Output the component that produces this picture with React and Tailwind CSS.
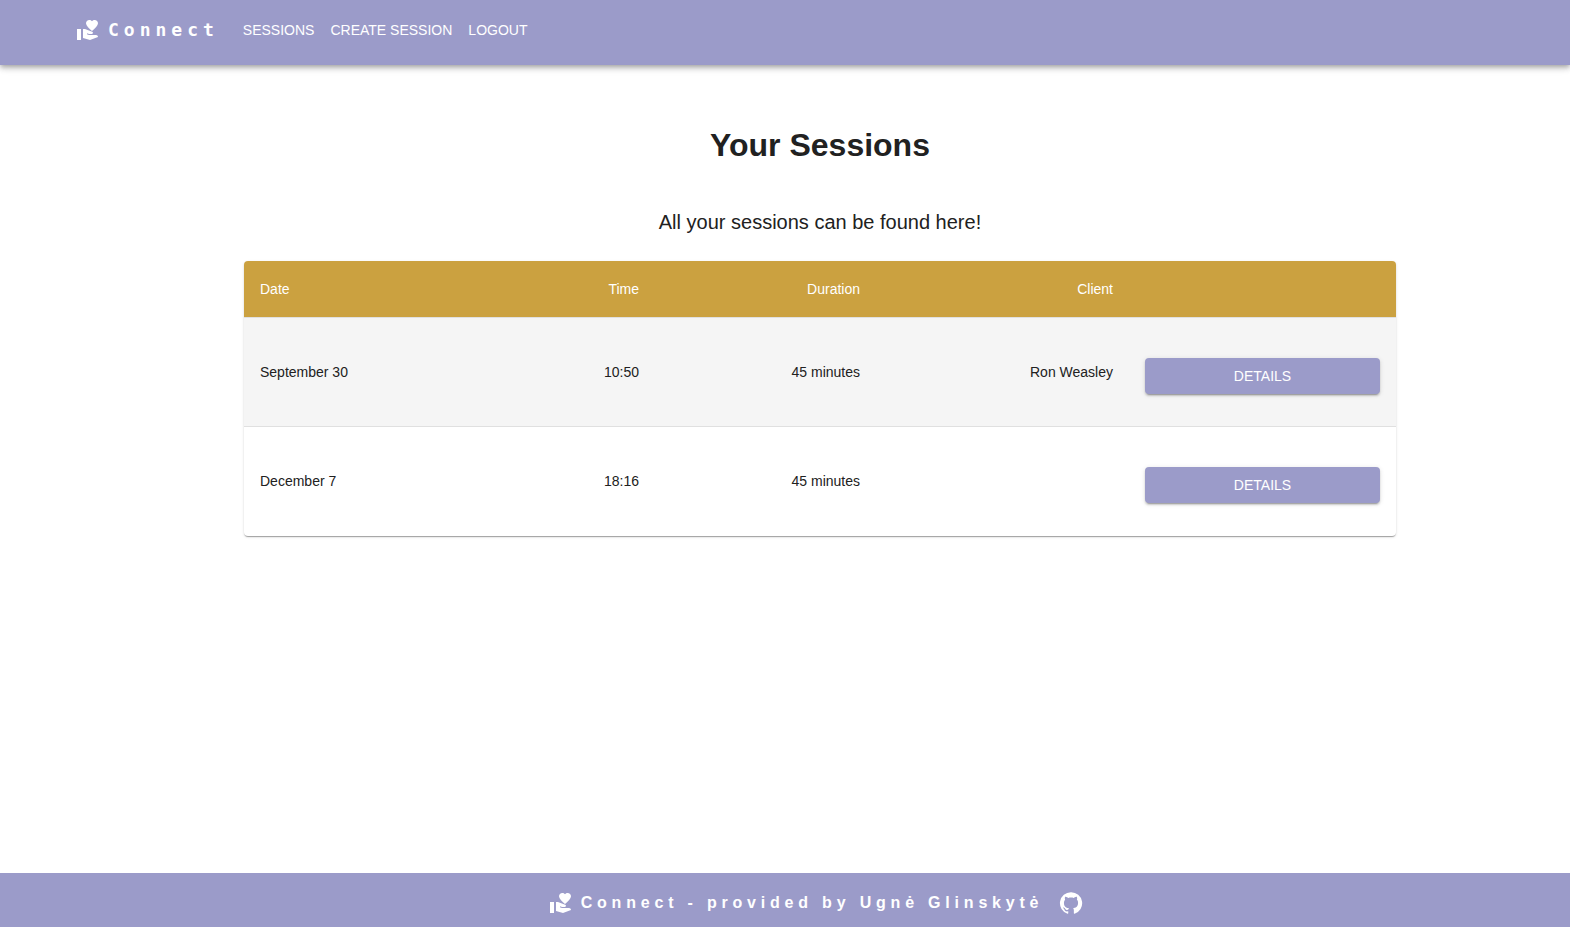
import React from "react";
import { MdVolunteerActivism } from "react-icons/md";

const navLinks = ["Sessions", "Create session", "Logout"];

const sessions = [
  { date: "September 30", time: "10:50", duration: "45 minutes", client: "Ron Weasley" },
  { date: "December 7", time: "18:16", duration: "45 minutes", client: "" },
];

function GitHubIcon() {
  return (
    <svg viewBox="0 0 24 24" className="size-6" fill="currentColor" aria-hidden="true">
      <path d="M12 1.27a11 11 0 00-3.48 21.46c.55.09.73-.28.73-.55v-1.84c-3.03.64-3.67-1.46-3.67-1.46-.55-1.29-1.28-1.65-1.28-1.65-.92-.65.1-.65.1-.65 1.1 0 1.73 1.1 1.73 1.1.92 1.65 2.57 1.2 3.21.92a2 2 0 01.64-1.47c-2.47-.27-5.04-1.19-5.04-5.5 0-1.1.46-2.1 1.2-2.84a3.76 3.76 0 010-2.93s.91-.28 3.11 1.1c1.8-.49 3.7-.49 5.5 0 2.1-1.38 3.02-1.1 3.02-1.1a3.76 3.76 0 01.1 2.93c.83.74 1.2 1.74 1.2 2.94 0 4.21-2.57 5.13-5.04 5.4.45.37.82.92.82 2.02v3.03c0 .27.1.64.73.55A11 11 0 0012 1.27" />
    </svg>
  );
}

function Header() {
  return (
    <header className="bg-[#9b9bc9] text-white shadow-[0_2px_4px_-1px_rgba(0,0,0,0.2),0_4px_5px_0_rgba(0,0,0,0.14),0_1px_10px_0_rgba(0,0,0,0.12)]">
      <div className="flex h-[65px] items-center pr-6 pb-1.5 pl-[76px]">
        <a href="#" className="mr-6 flex items-center gap-2">
          <MdVolunteerActivism className="size-6" aria-hidden="true" />
          <span className="font-['DejaVu_Sans_Mono',monospace] text-lg font-bold tracking-[5px]">Connect</span>
        </a>
        <nav className="flex gap-4">
          {navLinks.map((label) => (
            <a key={label} href="#" className="text-sm uppercase">
              {label}
            </a>
          ))}
        </nav>
      </div>
    </header>
  );
}

function SessionsTable() {
  return (
    <div className="overflow-hidden rounded shadow-[0_2px_1px_-1px_rgba(0,0,0,0.2),0_1px_1px_0_rgba(0,0,0,0.14),0_1px_3px_0_rgba(0,0,0,0.12)]">
      <table className="w-full table-fixed border-separate border-spacing-0 text-right text-sm">
        <colgroup>
          <col />
          <col className="w-[221px]" />
          <col className="w-[221px]" />
          <col className="w-[253px]" />
          <col className="w-[267px]" />
        </colgroup>
        <thead className="bg-[#cba140] text-white">
          <tr className="h-[57px]">
            {["Date", "Time", "Duration", "Client", ""].map((h, i) => (
              <th key={i} className="border-b border-[#e0e0e0] px-4 font-normal first:text-left">
                {h}
              </th>
            ))}
          </tr>
        </thead>
        <tbody>
          {sessions.map((s) => (
            <tr key={s.date} className="group odd:bg-[#f5f5f5]">
              <td className="border-b border-[#e0e0e0] px-4 text-left group-last:border-transparent">{s.date}</td>
              <td className="border-b border-[#e0e0e0] px-4 group-last:border-transparent">{s.time}</td>
              <td className="border-b border-[#e0e0e0] px-4 group-last:border-transparent">{s.duration}</td>
              <td className="border-b border-[#e0e0e0] px-4 group-last:border-transparent">{s.client}</td>
              <td className="border-b border-[#e0e0e0] px-4 pt-10 pb-8 group-last:border-transparent">
                <button
                  type="button"
                  className="block h-9 w-full rounded bg-[#9b9bc9] text-sm text-white uppercase shadow-[0_3px_1px_-2px_rgba(0,0,0,0.2),0_2px_2px_0_rgba(0,0,0,0.14),0_1px_5px_0_rgba(0,0,0,0.12)]"
                >
                  Details
                </button>
              </td>
            </tr>
          ))}
        </tbody>
      </table>
    </div>
  );
}

export default function App() {
  return (
    <div className="flex min-h-screen flex-col bg-white font-['Liberation_Sans',Arial,sans-serif] text-[#212121]">
      <Header />
      <main className="flex-1 pl-[70px]">
        <div className="mx-auto max-w-[1200px] px-6 pt-15">
          <h1 className="text-center text-[32px] leading-10 font-bold">Your Sessions</h1>
          <p className="mt-[41px] mb-[23px] text-center text-xl leading-8">All your sessions can be found here!</p>
          <SessionsTable />
        </div>
      </main>
      <footer className="flex h-[54px] items-center justify-center bg-[#9b9bc9] pt-1.5 pl-[62px] text-white">
        <div className="flex items-center">
          <MdVolunteerActivism className="mr-2 size-6" aria-hidden="true" />
          <span className="font-bold tracking-[0.3em]">Connect - provided by Ugnė Glinskytė</span>
          <a href="#" aria-label="GitHub" className="ml-4">
            <GitHubIcon />
          </a>
        </div>
      </footer>
    </div>
  );
}
